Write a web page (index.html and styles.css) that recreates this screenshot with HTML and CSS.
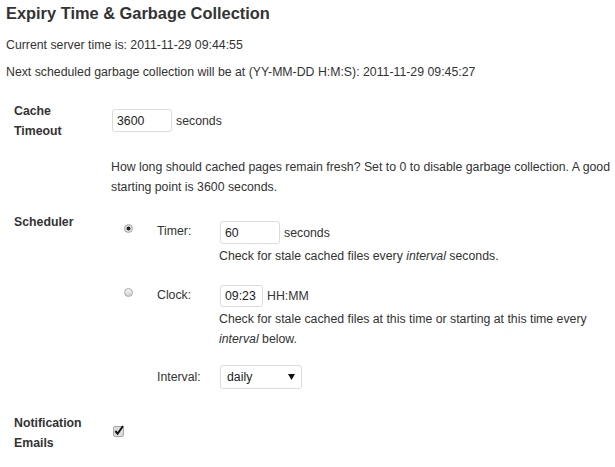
FILE: index.html
```html
<!DOCTYPE html>
<html lang="en">
<head>
    <meta charset="UTF-8">
    <title>Expiry Time &amp; Garbage Collection</title>
    <link rel="stylesheet" href="styles.css">
</head>
<body>
    <div class="wrap">
        <h3>Expiry Time &amp; Garbage Collection</h3>
        <p class="info first">Current server time is: 2011-11-29 09:44:55</p>
        <p class="info">Next scheduled garbage collection will be at (YY-MM-DD H:M:S): 2011-11-29 09:45:27</p>

        <div class="row cache">
            <div class="label">Cache Timeout</div>
            <div class="field">
                <div class="inline"><input type="text" class="txt w60" value="3600"> <span>seconds</span></div>
                <p class="desc">How long should cached pages remain fresh? Set to 0 to disable garbage collection. A good starting point is 3600 seconds.</p>
            </div>
        </div>

        <div class="row sched">
            <div class="label">Scheduler</div>
            <div class="field">
                <div class="opt">
                    <div class="rad"><input type="radio" name="sched" checked></div>
                    <div class="olabel">Timer:</div>
                    <div class="ofield">
                        <div class="inline"><input type="text" class="txt w60" value="60"> <span>seconds</span></div>
                        <p class="odesc">Check for stale cached files every <em>interval</em> seconds.</p>
                    </div>
                </div>
                <div class="opt clock">
                    <div class="rad"><input type="radio" name="sched"></div>
                    <div class="olabel">Clock:</div>
                    <div class="ofield">
                        <div class="inline"><input type="text" class="txt w43" value="09:23"> <span>HH:MM</span></div>
                        <p class="odesc">Check for stale cached files at this time or starting at this time every <em>interval</em> below.</p>
                    </div>
                </div>
                <div class="opt interval">
                    <div class="rad"></div>
                    <div class="olabel mid">Interval:</div>
                    <div class="ofield">
                        <span class="select-wrap">
                            <select class="sel"><option>daily</option><option>hourly</option><option>twicedaily</option></select>
                            <svg class="arrow" width="7" height="6" viewBox="0 0 7 6"><path d="M0 0H7L3.5 6Z" fill="#111"/></svg>
                        </span>
                    </div>
                </div>
            </div>
        </div>

        <div class="row notify">
            <div class="label">Notification Emails</div>
            <div class="field">
                <span class="check">
                    <svg width="13" height="13" viewBox="0 0 13 13">
                        <rect x="0.5" y="2.5" width="10" height="10" rx="1.5" fill="#dcdcdc" stroke="#a8a8a8"/>
                        <path d="M2.4 7L4.6 9.7L10 2" fill="none" stroke="#111" stroke-width="2"/>
                    </svg>
                </span>
            </div>
        </div>
    </div>
</body>
</html>
```

FILE: styles.css
```css
body { margin: 0; font-family: "Liberation Sans", Arial, sans-serif; font-size: 12.3px; line-height: 20px; color: #333; background: #fff; }
.wrap { padding: 3px 0 0 6px; }
h3 { margin: 0; font-size: 16.4px; line-height: 20px; font-weight: bold; color: #333; }
.info { margin: 7px 0 0 0; }
.info.first { margin-top: 12px; }

.row { display: flex; }
.label { width: 82px; margin: 0 16px 0 8px; font-weight: bold; }
.field { flex: 1; }
.cache { margin-top: 19px; }
.cache .field { padding-top: 8px; }
.sched { margin-top: 15px; }
.sched .field { padding-top: 9px; }
.notify { margin-top: 24px; }
.notify .field { padding-top: 10px; }

.inline { display: flex; align-items: center; gap: 4px; }
.txt { box-sizing: border-box; height: 23px; margin: 0; padding: 0 4px; border: 1px solid #dcdcdc; border-radius: 3px; font: 12.3px "Liberation Sans", Arial, sans-serif; color: #222; background: #fff; }
.w60 { width: 60px; }
.w43 { width: 43px; height: 22px; }
.desc { margin: 25px 0 0 -1px; }

.opt { display: flex; }
.opt.clock { margin-top: 19px; }
.opt.interval { margin-top: 16px; }
.rad { width: 33px; padding-left: 12px; }
.olabel { width: 63px; }
.olabel.mid { line-height: 24px; }
.ofield { flex: 1; padding-right: 20px; }
.odesc { margin: 2px 0 0 -1px; }

.rad input { appearance: none; -webkit-appearance: none; box-sizing: border-box; width: 9px; height: 9px; margin: 3px 0 0 0; border: 1px solid #a8a8a8; border-radius: 50%; background: linear-gradient(#f6f6f6, #d0d0d0); display: block; }
.rad input:checked { background: radial-gradient(circle, #222 0, #222 1.7px, #e2e2e2 2.3px, #cfcfcf 100%); }

.select-wrap { position: relative; display: inline-block; }
.sel { appearance: none; -webkit-appearance: none; box-sizing: border-box; width: 82px; height: 24px; margin: 0; padding: 0 6px; border: 1px solid #dcdcdc; border-radius: 3px; background: #fff; font: 12.3px "Liberation Sans", Arial, sans-serif; color: #222; }
.arrow { position: absolute; right: 7px; top: 9px; }

.check { display: inline-block; margin-left: 1px; }
.check svg { display: block; }
```
